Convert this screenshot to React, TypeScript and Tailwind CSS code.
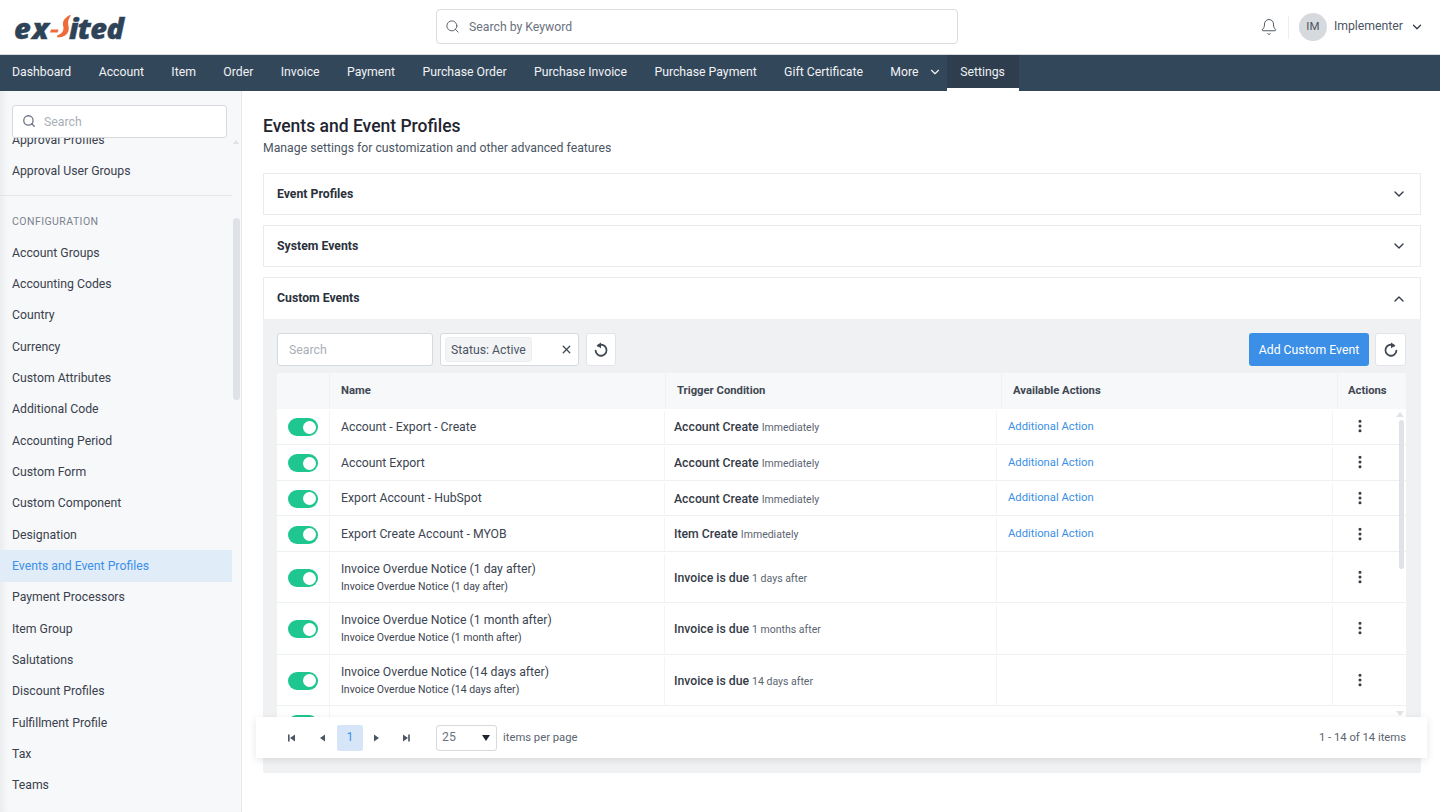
import React from "react";
import { Search, Bell, ChevronDown, ChevronUp, X, EllipsisVertical } from "lucide-react";

const navItems = ["Dashboard", "Account", "Item", "Order", "Invoice", "Payment", "Purchase Order", "Purchase Invoice", "Purchase Payment", "Gift Certificate"];
const configItems = ["Account Groups", "Accounting Codes", "Country", "Currency", "Custom Attributes", "Additional Code", "Accounting Period", "Custom Form", "Custom Component", "Designation", "Events and Event Profiles", "Payment Processors", "Item Group", "Salutations", "Discount Profiles", "Fulfillment Profile", "Tax", "Teams", "Time Zones"];

type RowData = { name: string; sub?: string; trigger: string; when: string; action?: boolean };
const rows: RowData[] = [
  { name: "Account - Export - Create", trigger: "Account Create", when: "Immediately", action: true },
  { name: "Account Export", trigger: "Account Create", when: "Immediately", action: true },
  { name: "Export Account - HubSpot", trigger: "Account Create", when: "Immediately", action: true },
  { name: "Export Create Account - MYOB", trigger: "Item Create", when: "Immediately", action: true },
  { name: "Invoice Overdue Notice (1 day after)", sub: "Invoice Overdue Notice (1 day after)", trigger: "Invoice is due", when: "1 days after" },
  { name: "Invoice Overdue Notice (1 month after)", sub: "Invoice Overdue Notice (1 month after)", trigger: "Invoice is due", when: "1 months after" },
  { name: "Invoice Overdue Notice (14 days after)", sub: "Invoice Overdue Notice (14 days after)", trigger: "Invoice is due", when: "14 days after" },
];

function Reload({ flip }: { flip?: boolean }) {
  return (
    <svg width="16" height="16" viewBox="0 0 16 16" className={flip ? "-scale-x-100" : ""} fill="none">
      <path d="M5 3.7A5.5 5.5 0 1 1 2.6 8.6" stroke="#3f4752" strokeWidth="1.8" strokeLinecap="round" />
      <path d="M8 0.6V6.2L3.6 3.6Z" fill="#3f4752" />
    </svg>
  );
}

function Logo() {
  return (
    <div className="flex items-center text-[#2f4358] italic font-extrabold text-[29px] leading-none [font-family:'Open_Sans',sans-serif] [-webkit-text-stroke:0.4px_#2f4358]">
      <span className="tracking-[1.4px]">ex</span>
      <svg width="21" height="30" viewBox="0 0 21 30" className="-mr-[2px] -mt-[3px]">
        <path d="M1 18.5H8.5L7.6 21.5H0Z" fill="#ee6a3a" />
        <path d="M20 4C16 6 13.5 8.5 13 11.5C12.6 14.5 14 16 13.3 19C12.7 21.5 10.5 23.5 7 24.5L7.5 26.5C13.5 26.5 18 23.5 18.7 19C19.2 15.5 17.8 14 18.1 11C18.4 8.5 19.5 6 21 4.5Z" fill="#ee6a3a" />
      </svg>
      <span className="tracking-[-0.7px]">ited</span>
    </div>
  );
}

function Toggle() {
  return (
    <span className="flex h-[18px] w-[30px] items-center justify-end rounded-full bg-[#1fc690] pr-[2px]">
      <span className="h-[13px] w-[13px] rounded-full bg-white" />
    </span>
  );
}

function Triangle({ dir, bar }: { dir: "l" | "r"; bar?: boolean }) {
  const left = dir === "l";
  return (
    <svg width="10" height="10" viewBox="0 0 10 10" fill="#4b5563">
      <path d={left ? "M8 1.5V8.5L3 5Z" : "M2 1.5V8.5L7 5Z"} />
      {bar && <rect x={left ? 1 : 7.2} y="1.5" width="1.6" height="7" />}
    </svg>
  );
}

function Row({ r }: { r: RowData }) {
  return (
    <div className={`grid grid-cols-[53px_335px_332px_336px_57px] border-b border-[#eef0f2] pt-[2px] ${r.sub ? "h-[51.33px]" : "h-[35.75px]"}`}>
      <div className="flex items-center justify-center border-r border-[#f3f4f6]"><Toggle /></div>
      <div className="flex flex-col justify-center border-r border-[#f3f4f6] pl-[11px]">
        <div className="text-[12.25px] leading-[17px] text-[#3d4552]">{r.name}</div>
        {r.sub && <div className="mt-[1px] text-[10.5px] leading-[16px] text-[#3d4552]">{r.sub}</div>}
      </div>
      <div className="flex items-center border-r border-[#f3f4f6] pl-[9px]">
        <span className="flex items-baseline">
          <span className="text-[12.25px] font-medium text-[#343b47]">{r.trigger}</span>
          <span className="ml-[3px] text-[10.5px] text-[#5b6470]">{r.when}</span>
        </span>
      </div>
      <div className="flex items-center border-r border-[#f3f4f6] pl-[11px]">
        {r.action && <span className="text-[11.25px] text-[#3b8fe6]">Additional Action</span>}
      </div>
      <div className="flex items-center justify-center pr-[3px]">
        <EllipsisVertical size={16} strokeWidth={2.6} className="-mt-[2px] text-[#343b47]" />
      </div>
    </div>
  );
}

function Accordion({ title, open }: { title: string; open?: boolean }) {
  return (
    <div className={`flex h-[42px] items-center justify-between border border-[#e9ebef] bg-white px-[13px] ${open ? "border-b-0" : "mb-[10px]"}`}>
      <span className="text-[12.25px] font-bold text-[#2b313b]">{title}</span>
      {open ? <ChevronUp size={16} strokeWidth={2} className="text-[#343b47]" /> : <ChevronDown size={16} strokeWidth={2} className="text-[#343b47]" />}
    </div>
  );
}

export default function App() {
  return (
    <div className="flex h-[812px] w-[1440px] flex-col overflow-hidden bg-white [font-family:Roboto,sans-serif]">
      <header className="flex h-[55px] shrink-0 items-center border-b border-[#d5d8dc] bg-white">
        <div className="w-[436px] pl-[14px]"><Logo /></div>
        <div className="-mt-[1px] flex h-[35px] w-[522px] items-center rounded border border-[#d9dce1] pl-[8px]">
          <Search size={15} strokeWidth={1.6} className="text-[#5b6470]" />
          <span className="ml-[9px] pt-[1px] text-[12.25px] text-[#6b7280]">Search by Keyword</span>
        </div>
        <div className="ml-auto flex items-center pr-[16px]">
          <Bell size={18} strokeWidth={1.3} className="mr-[10px] text-[#4b5563]" />
          <span className="mr-[10px] h-[23px] w-px bg-[#eceef0]" />
          <span className="flex h-[28px] w-[28px] items-center justify-center rounded-full bg-[#d6d9dd] text-[11.5px] text-[#4b5563]">IM</span>
          <span className="-mt-[1px] ml-[7px] text-[12.25px] text-[#4b5563]">Implementer</span>
          <ChevronDown size={14} strokeWidth={2.2} className="ml-[7px] text-[#343b47]" />
        </div>
      </header>

      <nav className="flex h-[36px] shrink-0 items-start bg-[#33475b] text-[12.25px] text-[#f0f2f4]">
        {navItems.map((n) => (
          <span key={n} className="mr-[3.4px] flex h-[34px] items-center px-[12px]">{n}</span>
        ))}
        <span className="flex h-[34px] items-center pl-[12px] pr-[5px]">More<ChevronDown size={14} strokeWidth={2} className="ml-[9px]" /></span>
        <span className="flex h-[36px] w-[72px] items-start justify-center border-b-[3px] border-white bg-[#2e3e4f] pt-[10px] leading-[15px] text-[#eef0f2]">Settings</span>
      </nav>
      <div className="relative flex min-h-0 flex-1">
        <aside className="relative w-[242px] shrink-0 overflow-hidden border-r border-[#e6e8eb] bg-[#f7f8fa] pt-[33.5px] text-[12.25px] text-[#3a414d] shadow-[inset_8px_0_8px_-6px_rgba(0,0,0,0.07)]">
          <div className="w-[232px]">
            <div className="flex h-[31.33px] items-center pl-[12px]">Approval Profiles</div>
            <div className="flex h-[31.33px] items-center pl-[12px]">Approval User Groups</div>
            <div className="mt-[8px] border-b border-[#e3e5e9]" />
            <div className="flex h-[41px] items-center pl-[12px] pt-[11px] text-[10.5px] tracking-[0.45px] text-[#7b828e]">CONFIGURATION</div>
            {configItems.map((c) => (
              <div key={c} className={`flex h-[31.33px] items-center pl-[12px] ${c.startsWith("Events") ? "bg-[#e1ecf9] text-[#3d8fe8]" : ""}`}>{c}</div>
            ))}
          </div>
          <div className="absolute left-[12px] top-[14px] flex h-[33px] w-[215px] items-center rounded-[3px] border border-[#d6d9de] bg-white pl-[9px]">
            <Search size={14} strokeWidth={2.2} className="-mt-[1px] text-[#6b7280]" />
            <span className="ml-[8px] pt-[1px] text-[12.25px] text-[#a9afb8]">Search</span>
          </div>
          <div className="absolute right-[1px] top-[127px] h-[182px] w-[7px] rounded bg-[#dfe2e6]" />
          <div className="absolute right-[2px] top-[49px] h-0 w-0 border-x-[3px] border-b-[4px] border-x-transparent border-b-[#dfe2e6]" />
        </aside>

        <main className="min-w-0 flex-1 pl-[21px] pr-[19px]">
          <h1 className="mt-[23px] text-[17.5px] font-medium leading-[24px] text-[#1f2530]">Events and Event Profiles</h1>
          <p className="text-[12.25px] leading-[20px] text-[#4b5563]">Manage settings for customization and other advanced features</p>
          <div className="mt-[15px]">
            <Accordion title="Event Profiles" />
            <Accordion title="System Events" />
            <Accordion title="Custom Events" open />
          </div>
          <section className="rounded-b-[2px] bg-[#f0f1f3] pb-[15px]">
            <div className="flex h-[54px] items-start pl-[14px] pr-[15px] pt-[14px]">
              <div className="flex h-[33px] w-[156px] items-center rounded-[3px] border border-[#d6d9de] bg-white pl-[11px] pt-[1px] text-[12.25px] text-[#a9afb8]">Search</div>
              <div className="ml-[7px] flex h-[33px] w-[139px] items-center justify-between rounded-[3px] border border-[#d6d9de] bg-white pl-[4px] pr-[5px]">
                <span className="flex h-[25px] items-center rounded-[3px] border border-[#eceef1] bg-[#f3f4f6] px-[5px] pt-[1px] text-[12.25px] text-[#4b5563]">Status: Active</span>
                <X size={13} strokeWidth={2.4} className="text-[#3f4752]" />
              </div>
              <div className="ml-[7px] flex h-[33px] w-[30px] items-center justify-center rounded-[3px] border border-[#e2e4e8] bg-white"><Reload /></div>
              <div className="ml-auto flex h-[33px] w-[120px] items-center justify-center rounded-[3px] bg-[#3b8fe6] pt-[1px] text-[12.25px] text-white">Add Custom Event</div>
              <div className="ml-[6px] flex h-[33px] w-[31px] items-center justify-center rounded-[3px] border border-[#e2e4e8] bg-white"><Reload flip /></div>
            </div>
            <div className="ml-[14px] mr-[15px]">
              <div className="grid h-[36px] grid-cols-[53px_336px_336px_336px_68px] bg-[#f7f8fa] text-[11.25px] font-bold text-[#3f4752]">
                <div className="border-r border-[#f0f1f3]" />
                <div className="flex items-center border-r border-[#f0f1f3] pl-[11px]">Name</div>
                <div className="flex items-center border-r border-[#f0f1f3] pl-[11px]">Trigger Condition</div>
                <div className="flex items-center border-r border-[#f0f1f3] pl-[11px]">Available Actions</div>
                <div className="flex items-center pl-[10px]">Actions</div>
              </div>
              <div className="relative h-[308px] overflow-hidden bg-white">
                {rows.map((r) => <Row key={r.name} r={r} />)}
                <div className="grid h-[36px] grid-cols-[53px_335px]">
                  <div className="flex items-center justify-center border-r border-[#f3f4f6]"><Toggle /></div>
                </div>
                <div className="absolute right-[2px] top-[3px] h-0 w-0 border-x-[4px] border-b-[5px] border-x-transparent border-b-[#dfe2e6]" />
                <div className="absolute right-[2px] top-[11px] h-[149px] w-[5px] rounded bg-[#dfe2e6]" />
                <div className="absolute right-[2px] bottom-[1px] h-0 w-0 border-x-[4px] border-t-[5px] border-x-transparent border-t-[#dfe2e6]" />
              </div>
            </div>
            <div className="relative -ml-[7px] -mr-[6px] flex h-[41px] items-center bg-white pl-[31px] pr-[21px] text-[11.25px] text-[#5b6470] shadow-[0_2px_8px_rgba(0,0,0,0.1)]">
              <Triangle dir="l" bar />
              <span className="w-[20px]" />
              <Triangle dir="l" />
              <span className="ml-[10px] mr-[9px] flex h-[26px] w-[26px] items-center justify-center rounded-[2px] bg-[#d6e6f8] text-[12.25px] text-[#3d8fe8]">1</span>
              <Triangle dir="r" />
              <span className="w-[19px]" />
              <Triangle dir="r" bar />
              <div className="ml-[25px] flex h-[26px] w-[61px] items-center justify-between rounded-[3px] border border-[#d6d9de] pl-[5px] pr-[6px] text-[12.25px] text-[#6b7280]">
                25
                <span className="h-0 w-0 border-x-[4px] border-t-[6px] border-x-transparent border-t-[#1f2530]" />
              </div>
              <span className="ml-[6px] pt-[1px]">items per page</span>
              <span className="ml-auto pt-[1px]">1 - 14 of 14 items</span>
            </div>
          </section>
        </main>
      </div>
    </div>
  );
}
